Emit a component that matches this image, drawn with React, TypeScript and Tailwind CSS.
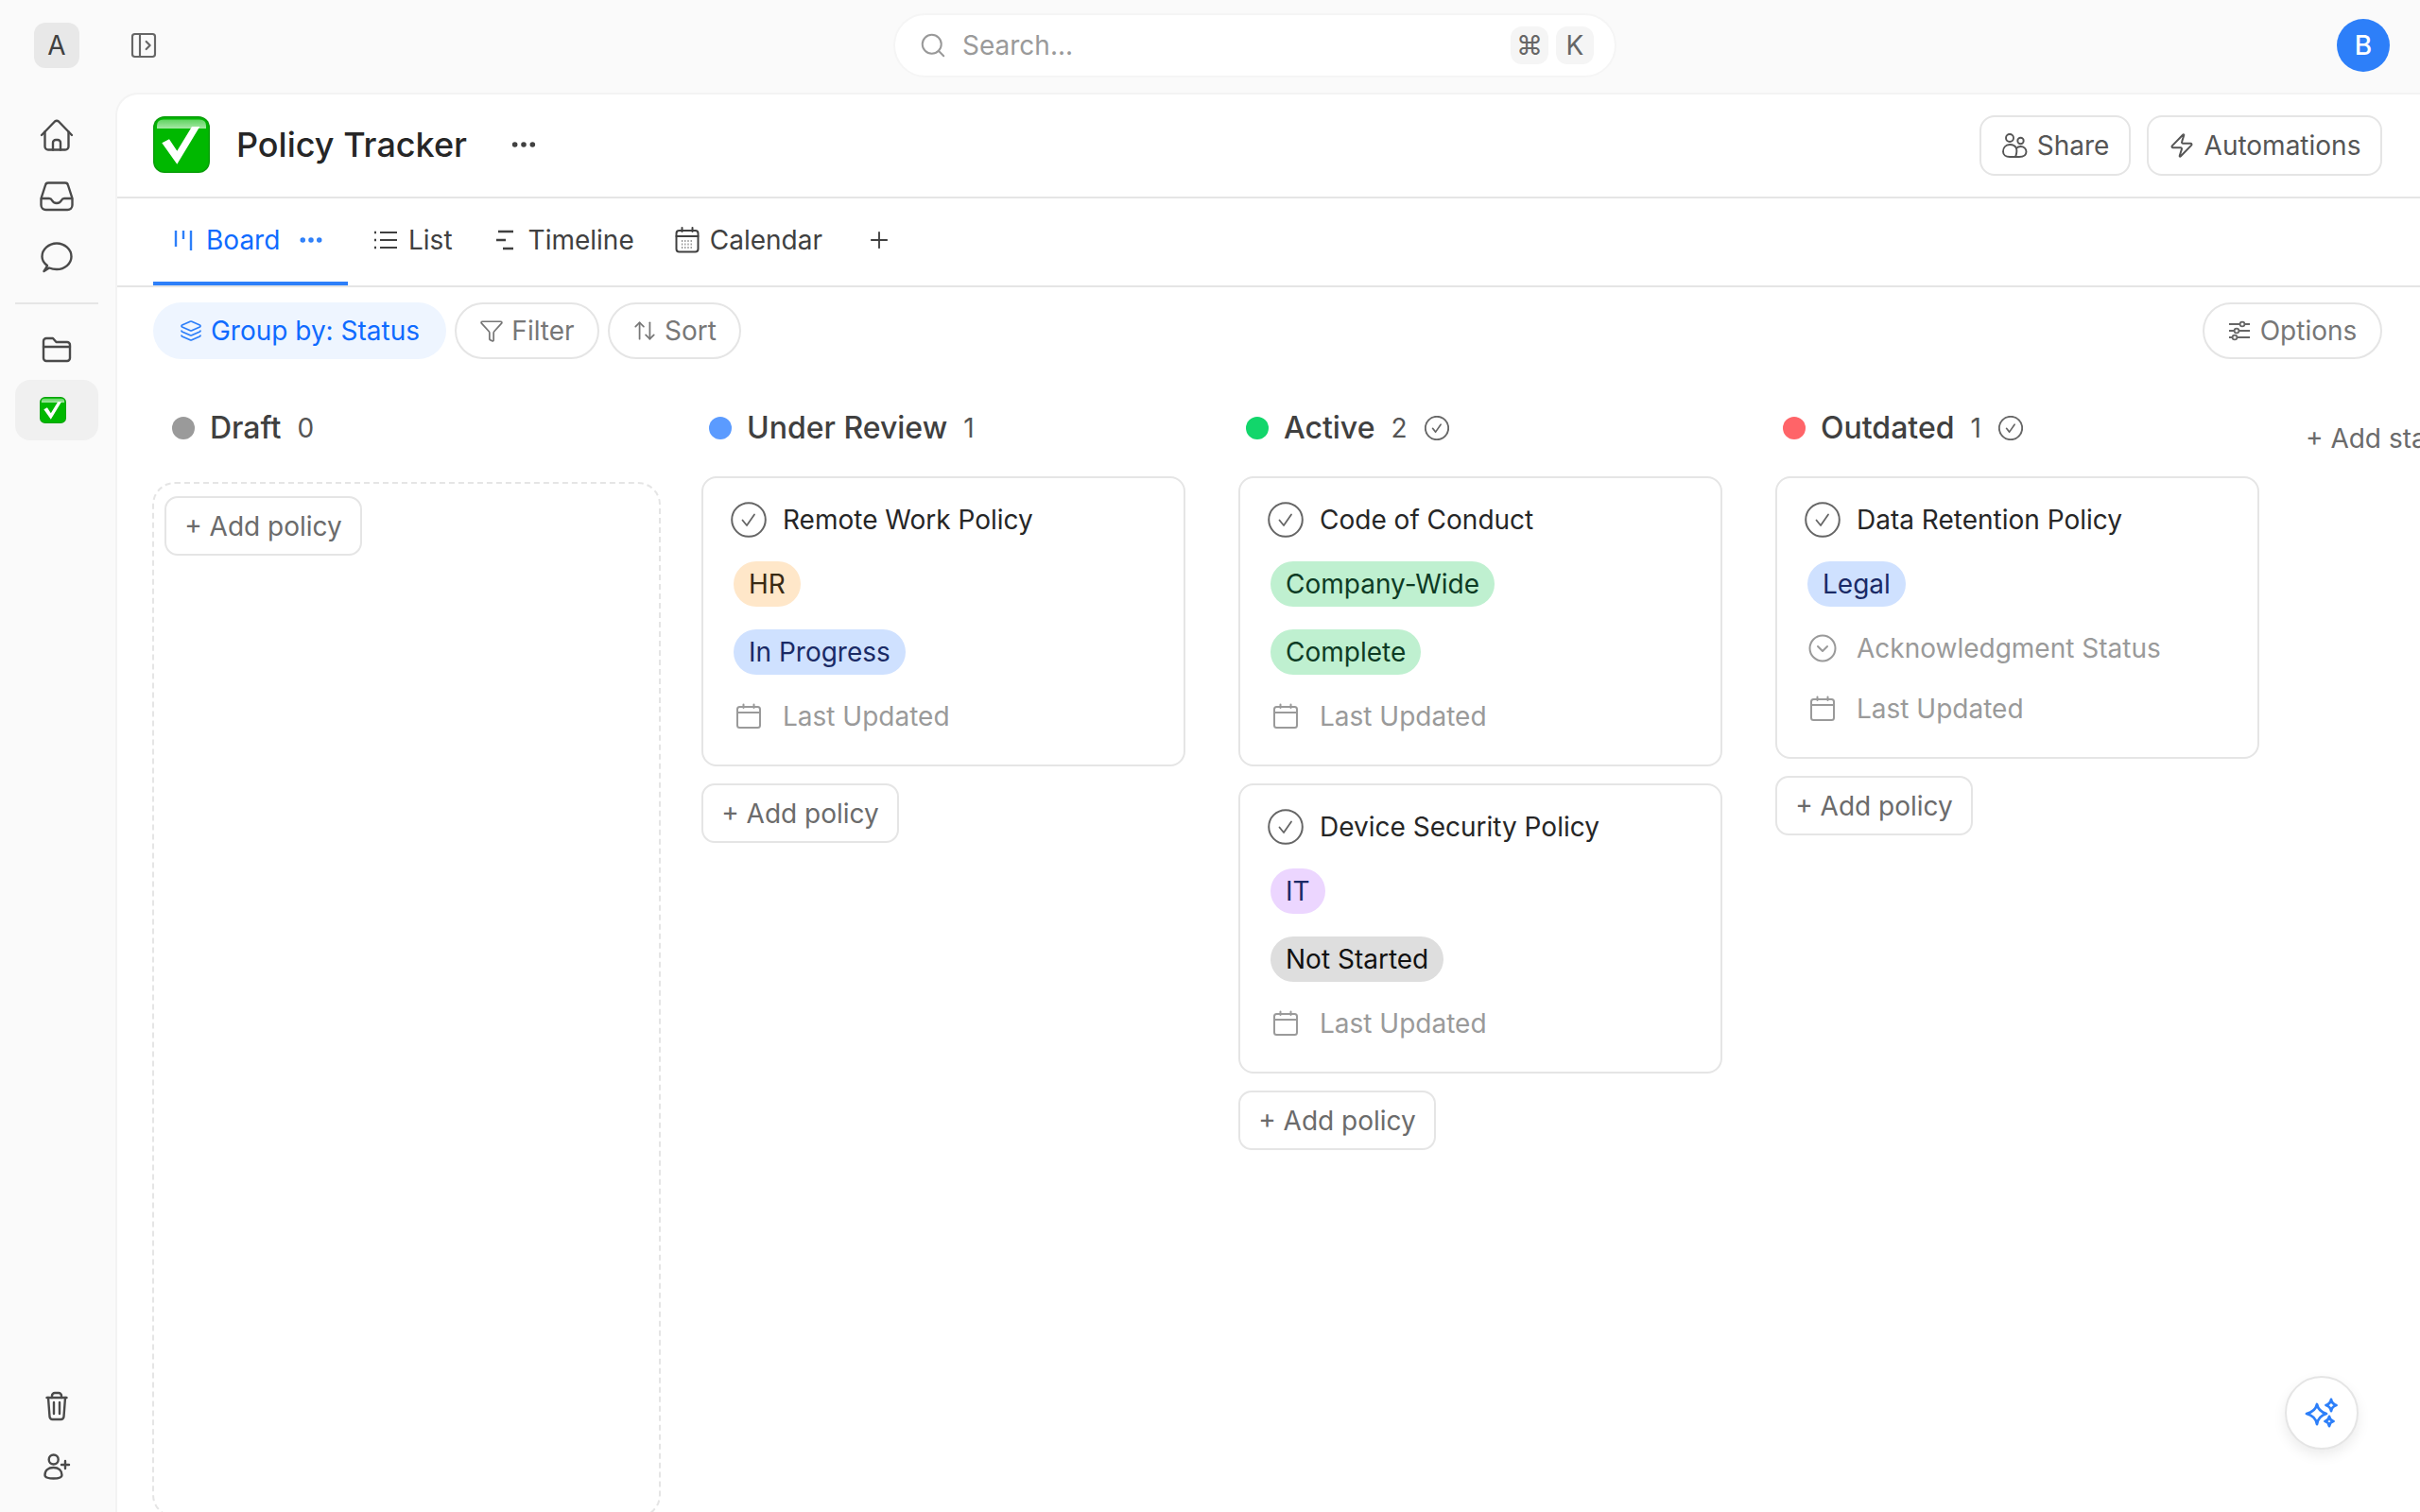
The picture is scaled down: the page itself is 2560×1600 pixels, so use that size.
import React from 'react';
import { ArrowUpDown, Ellipsis, Funnel, Layers, PanelLeftOpen, Plus, Search, Zap } from 'lucide-react';

const HomeIcon = () => (
  <svg width="36" height="36" viewBox="0 0 36 36" fill="none" stroke="#4a4a4a" strokeWidth="2.4" strokeLinecap="round" strokeLinejoin="round">
    <path d="M2 18 L16 3.5 Q18 1.8 20 3.5 L34 18" />
    <path d="M5.5 14.5 V30 a3.5 3.5 0 0 0 3.5 3.5 H27 a3.5 3.5 0 0 0 3.5 -3.5 V14.5" />
    <path d="M14 33.5 V26 a3 3 0 0 1 3 -3 h2 a3 3 0 0 1 3 3 V33.5" />
  </svg>
);

const InboxIcon = () => (
  <svg width="36" height="36" viewBox="0 0 36 36" fill="none" stroke="#4a4a4a" strokeWidth="2.4" strokeLinecap="round" strokeLinejoin="round">
    <path d="M9 3.5 H27 Q29.5 3.5 30 6 L34.5 20 V27 a5 5 0 0 1 -5 5 H6.5 a5 5 0 0 1 -5 -5 V20 L6 6 Q6.5 3.5 9 3.5 Z" />
    <path d="M2 20 H10 Q12 20 13 22 Q14.5 25 18 25 Q21.5 25 23 22 Q24 20 26 20 H34" />
  </svg>
);

const ChatIcon = () => (
  <svg width="36" height="36" viewBox="0 0 36 36" fill="none" stroke="#4a4a4a" strokeWidth="2.4" strokeLinecap="round" strokeLinejoin="round">
    <path d="M8 27 C4.5 24.5 2.5 21 2.5 17.5 C2.5 10 9.5 3.5 18 3.5 C26.5 3.5 33.5 10 33.5 17.5 C33.5 25 26.5 31 18 31 C15 31 12.5 30.5 10 29.5 L4.5 33 Q6.8 30 8 27 Z" />
  </svg>
);

const FolderIcon = () => (
  <svg width="36" height="36" viewBox="0 0 36 36" fill="none" stroke="#4a4a4a" strokeWidth="2.4" strokeLinecap="round" strokeLinejoin="round">
    <path d="M7 6 H14 L17.5 10 H29 a3 3 0 0 1 3 3 V27 a3 3 0 0 1 -3 3 H7 a3 3 0 0 1 -3 -3 V9 a3 3 0 0 1 3 -3Z" />
    <path d="M4 15 H32" />
  </svg>
);

const TrashIcon = () => (
  <svg width="36" height="36" viewBox="0 0 36 36" fill="none" stroke="#4a4a4a" strokeWidth="2.4" strokeLinecap="round" strokeLinejoin="round">
    <path d="M7.5 9 H28.5" />
    <path d="M9 9 L10.5 29 a3 3 0 0 0 3 3 H22.5 a3 3 0 0 0 3 -3 L27 9" />
    <path d="M13 9 V7 a3 3 0 0 1 3 -3 h4 a3 3 0 0 1 3 3 V9" />
    <path d="M15 14 V26 M21 14 V26" />
  </svg>
);

const UserPlusIcon = () => (
  <svg width="36" height="36" viewBox="0 0 36 36" fill="none" stroke="#4a4a4a" strokeWidth="2.4" strokeLinecap="round" strokeLinejoin="round">
    <circle cx="14.7" cy="10.5" r="5" />
    <path d="M5.5 27 C5.5 22 9 19 14.5 19 C20 19 23.5 22 23.5 27 C23.5 29.5 19 30.5 14.5 30.5 C10 30.5 5.5 29.5 5.5 27Z" />
    <path d="M27 12 V20 M23 16 H31" />
  </svg>
);

// glossy green check box, same drawing in title and sidebar
const CheckEmoji = ({ size }: { size: number }) => (
  <svg width={size} height={size} viewBox="0 0 60 60">
    <defs>
      <linearGradient id="gloss" x1="0" y1="0" x2="0" y2="1">
        <stop offset="0" stopColor="#5fd35f" />
        <stop offset="1" stopColor="#a5e8a5" />
      </linearGradient>
    </defs>
    <rect x="0" y="0" width="60" height="60" rx="12" fill="#0a9e0a" />
    <rect x="1.5" y="1.5" width="57" height="57" rx="11" fill="#00b800" />
    <path d="M4 10 Q4 3.5 11 3.5 H49 Q56 3.5 56 10 V13 H4 Z" fill="url(#gloss)" />
    <path d="M9.3 28.3 L17 24.3 L25.3 36.7 L41 11 L49.3 11 L25.3 50.7 Z" fill="#fff" />
  </svg>
);

const CheckCircle = ({ size = 38 }: { size?: number }) => (
  <svg width={size} height={size} viewBox="0 0 38 38" fill="none" stroke="#666" strokeLinecap="round" strokeLinejoin="round">
    <circle cx="19" cy="19" r="17.8" strokeWidth={size < 30 ? 2.8 : 2} />
    <path d="M12.5 19.5 L17 25 L25 13.5" strokeWidth={size < 30 ? 2.4 : 1.8} />
  </svg>
);

const CalendarSmall = () => (
  <svg width="28" height="28" viewBox="0 0 28 28" fill="none" stroke="#9a9a9a" strokeWidth="2" strokeLinecap="round" strokeLinejoin="round">
    <rect x="2" y="4" width="24" height="22" rx="2.5" />
    <path d="M2 10 H26 M8.5 1.5 V5 M19.5 1.5 V5" />
  </svg>
);

const ChevronCircle = () => (
  <svg width="30" height="30" viewBox="0 0 30 30" fill="none" stroke="#9a9a9a" strokeWidth="2" strokeLinecap="round" strokeLinejoin="round">
    <circle cx="15" cy="15" r="13.5" />
    <path d="M10 13 L15 18 L20 13" />
  </svg>
);

const BoardIcon = () => (
  <svg width="20" height="24" viewBox="0 0 20 24" fill="none" stroke="#2d7ff9" strokeWidth="2.4">
    <path d="M2 2 V19 M10 2 V11 M18 2 V23" />
  </svg>
);

const ListIcon = () => (
  <svg width="26" height="24" viewBox="0 0 26 24" fill="none" stroke="#404040" strokeWidth="2.2">
    <path d="M7 4 H25 M7 12 H25 M7 20 H25" />
    <path d="M1 4 H3 M1 12 H3 M1 20 H3" strokeWidth="2.4" />
  </svg>
);

const TimelineIcon = () => (
  <svg width="20" height="24" viewBox="0 0 20 24" fill="none" stroke="#404040" strokeWidth="2.4">
    <path d="M3 3 H19 M1 12 H11 M8 21 H19" />
  </svg>
);

const CalendarTab = () => (
  <svg width="26" height="28" viewBox="0 0 26 28" fill="none" stroke="#404040" strokeWidth="2" strokeLinecap="round" strokeLinejoin="round">
    <rect x="1.5" y="4" width="23" height="22.5" rx="3" />
    <path d="M1.5 10 H24.5 M7.5 1 V5 M18.5 1 V5" />
    <path d="M7 15 H19 M7 18.5 H19 M7 22 H19" stroke="#8a8a8a" strokeWidth="2" strokeDasharray="1.2 2" strokeLinecap="butt" />
  </svg>
);

const ShareIcon = () => (
  <svg width="28" height="28" viewBox="0 0 28 28" fill="none" stroke="#555" strokeWidth="1.9" strokeLinecap="round" strokeLinejoin="round">
    <circle cx="9" cy="6" r="4" />
    <circle cx="20.5" cy="9" r="3.2" />
    <path d="M9 13 C4.5 13 2 16.5 2 20.5 C2 24 5 26 9 26 H19 C23.5 26 26.5 24 26.5 20.5 C26.5 17.5 24 15 20.5 15 C18.5 15 17 15.8 16 17 C15 14.5 12.5 13 9 13 Z" />
    <path d="M16 17 C16.6 19 16.6 22 15 26" />
  </svg>
);

const OptionsIcon = () => (
  <svg width="24" height="24" viewBox="0 0 24 24" fill="none" stroke="#666" strokeWidth="1.8">
    <path d="M1 5 H23 M1 12 H23 M1 19 H23" />
    <circle cx="15" cy="5" r="2.4" fill="#fff" />
    <circle cx="9" cy="12" r="2.4" fill="#fff" />
    <circle cx="7" cy="19" r="2.4" fill="#fff" />
  </svg>
);

const SparkIcon = () => (
  <svg width="36" height="32" viewBox="0 0 36 32" fill="none" stroke="#2d7ff9" strokeWidth="2.8" strokeLinejoin="round">
    <path d="M13 7 Q14.5 14.5 23 17 Q14.5 19.5 13 28 Q11.5 19.5 2 17 Q11.5 14.5 13 7 Z" />
    <path d="M28 2 Q28.8 6.5 33.5 8 Q28.8 9.5 28 14 Q27.2 9.5 22.5 8 Q27.2 6.5 28 2 Z" />
    <path d="M26 20 Q26.6 24 30.5 25 Q26.6 26 26 30 Q25.4 26 21.5 25 Q25.4 24 26 20 Z" />
  </svg>
);

const AddPolicy = ({ className = '' }: { className?: string }) => (
  <button className={`flex h-[63px] w-[209px] items-center justify-center rounded-[14px] border-2 border-[#e5e5e5] bg-white text-[28px] text-[#6b6b6b] ${className}`}>
    + Add policy
  </button>
);

const Tag = ({ label, colors }: { label: string; colors: string }) => (
  <div className={`flex h-[48px] w-fit items-center rounded-full px-[16px] text-[28px] ${colors}`}>{label}</div>
);

const MetaRow = ({ icon, label }: { icon: React.ReactNode; label: string }) => (
  <div className="flex h-[44px] items-center text-[28px] text-[#9a9a9a]">
    <div className="flex w-[38px] justify-center">{icon}</div>
    <span className="ml-[17px]">{label}</span>
  </div>
);

type CardData = {
  title: string;
  tags: { label: string; colors: string }[];
  acknowledgment?: boolean;
};

const Card = ({ title, tags, acknowledgment }: CardData) => (
  <div className="rounded-[16px] border-2 border-[#e5e5e5] bg-white pb-[29px] pl-[29px] pt-[22px]">
    <div className="flex h-[44px] items-center text-[28px] text-[#262626]">
      <CheckCircle />
      <span className="ml-[17px]">{title}</span>
    </div>
    <div className="ml-[3px] mt-[22px] flex flex-col gap-[24px]">
      {tags.map((tag) => (
        <Tag key={tag.label} label={tag.label} colors={tag.colors} />
      ))}
    </div>
    {acknowledgment && (
      <div className="mt-[22px]">
        <MetaRow icon={<ChevronCircle />} label="Acknowledgment Status" />
      </div>
    )}
    <div className={acknowledgment ? 'mt-[20px]' : 'mt-[22px]'}>
      <MetaRow icon={<CalendarSmall />} label="Last Updated" />
    </div>
  </div>
);

const columns = [
  {
    name: 'Under Review',
    dot: 'bg-[#5b9bff]',
    count: 1,
    done: false,
    cards: [
      {
        title: 'Remote Work Policy',
        tags: [
          { label: 'HR', colors: 'bg-[#ffe7c9] text-[#3a2a14]' },
          { label: 'In Progress', colors: 'bg-[#cfe1ff] text-[#1a2a66]' },
        ],
      },
    ],
  },
  {
    name: 'Active',
    dot: 'bg-[#12d66b]',
    count: 2,
    done: true,
    cards: [
      {
        title: 'Code of Conduct',
        tags: [
          { label: 'Company-Wide', colors: 'bg-[#bff0d0] text-[#0d3b24]' },
          { label: 'Complete', colors: 'bg-[#bff0d0] text-[#0d3b24]' },
        ],
      },
      {
        title: 'Device Security Policy',
        tags: [
          { label: 'IT', colors: 'bg-[#ecd6ff] text-[#1a2a66]' },
          { label: 'Not Started', colors: 'bg-[#dedede] text-[#111]' },
        ],
      },
    ],
  },
  {
    name: 'Outdated',
    dot: 'bg-[#ff6468]',
    count: 1,
    done: true,
    cards: [
      {
        title: 'Data Retention Policy',
        tags: [{ label: 'Legal', colors: 'bg-[#cfe1ff] text-[#1a2a66]' }],
        acknowledgment: true,
      },
    ],
  },
];

const ColumnHeader = ({ name, dot, count, done }: { name: string; dot: string; count: number; done?: boolean }) => (
  <div className="flex h-[44px] items-center pl-[21px] pt-[1px]">
    <div className={`h-[24px] w-[24px] rounded-full ${dot}`} />
    <span className="ml-[16px] text-[32px] font-medium text-[#404040]">{name}</span>
    <span className="ml-[17px] text-[28px] text-[#555]">{count}</span>
    {done && (
      <span className="ml-[18px] flex">
        <CheckCircle size={26} />
      </span>
    )}
  </div>
);

export default function App() {
  return (
    <div className="flex h-screen w-screen flex-col overflow-hidden bg-[#fafafa] font-['Inter',sans-serif]">
      {/* Top bar */}
      <div className="flex h-[98px] shrink-0 items-center pb-[2px]">
        <div className="flex w-[945px] items-center pl-[36px]">
          <div className="flex h-[48px] w-[48px] items-center justify-center rounded-[12px] bg-[#e8e8e8] text-[28px] text-[#404040]">A</div>
          <PanelLeftOpen size={32} strokeWidth={1.6} color="#666" className="ml-[52px]" />
        </div>
        <div className="flex h-[68px] w-[765px] items-center rounded-full border-2 border-[#f5f5f5] bg-white pl-[25px] pr-[22px]">
          <Search size={30} strokeWidth={1.6} color="#999" />
          <span className="ml-[16px] text-[28px] text-[#9a9a9a]">Search...</span>
          <div className="ml-auto flex gap-[8px]">
            <div className="flex h-[40px] w-[40px] items-center justify-center rounded-[12px] bg-[#f5f5f5] text-[28px] text-[#666]">⌘</div>
            <div className="flex h-[40px] w-[40px] items-center justify-center rounded-[12px] bg-[#f5f5f5] text-[28px] text-[#666]">K</div>
          </div>
        </div>
        <div className="flex flex-1 justify-end pr-[32px]">
          <div className="flex h-[56px] w-[56px] items-center justify-center rounded-full bg-[#2d7ff9] text-[28px] font-medium text-white">B</div>
        </div>
      </div>

      <div className="flex min-h-0 flex-1">
        {/* Sidebar */}
        <div className="flex w-[122px] shrink-0 flex-col items-center pb-[30px] pr-[2px] pt-[27px]">
          <div className="flex flex-col items-center gap-[29px]">
            <HomeIcon />
            <InboxIcon />
            <div className="-mt-[1px] flex">
              <ChatIcon />
            </div>
          </div>
          <div className="mt-[30px] h-[2px] w-[88px] bg-[#e5e5e5]" />
          <div className="mt-[30px] flex">
            <FolderIcon />
          </div>
          <div className="mt-[14px] flex h-[64px] w-[88px] items-center justify-center rounded-[16px] bg-[#f0f0f0]">
            <div className="mr-[8px] flex">
              <CheckEmoji size={28} />
            </div>
          </div>
          <div className="mt-auto flex flex-col items-center gap-[28px]">
            <TrashIcon />
            <UserPlusIcon />
          </div>
        </div>

        {/* Main panel */}
        <div className="relative min-w-0 flex-1 overflow-hidden rounded-tl-[24px] border-l-2 border-t-2 border-[#f3f3f3] bg-white">
          <div className="flex h-[110px] items-center justify-between border-b-2 border-[#e5e5e5] pl-[38px] pr-[40px]">
            <div className="flex items-center pb-[2px]">
              <CheckEmoji size={60} />
              <span className="ml-[28px] text-[36px] font-medium text-[#262626]">Policy Tracker</span>
              <Ellipsis size={32} color="#404040" strokeWidth={2.2} className="ml-[44px]" />
            </div>
            <div className="flex gap-[17px]">
              <button className="flex h-[64px] w-[160px] items-center justify-center gap-[10px] rounded-[16px] border-2 border-[#e5e5e5] text-[28px] text-[#555]">
                <ShareIcon />
                Share
              </button>
              <button className="flex h-[64px] w-[249px] items-center justify-center gap-[10px] rounded-[16px] border-2 border-[#e5e5e5] text-[28px] text-[#555]">
                <Zap size={28} strokeWidth={1.7} color="#555" />
                Automations
              </button>
            </div>
          </div>

          <div className="flex h-[94px] items-stretch border-b-2 border-[#e5e5e5] pl-[38px]">
            <div className="flex w-[206px] items-center border-b-[4px] border-[#2d7ff9] pl-[22px] text-[28px] text-[#0f6bff]">
              <BoardIcon />
              <span className="ml-[14px]">Board</span>
              <Ellipsis size={30} color="#2d7ff9" strokeWidth={2.4} className="ml-[18px]" />
            </div>
            <div className="ml-[27px] flex items-center pb-[4px] text-[28px] text-[#404040]">
              <ListIcon />
              <span className="ml-[11px]">List</span>
            </div>
            <div className="ml-[45px] flex items-center pb-[4px] text-[28px] text-[#404040]">
              <TimelineIcon />
              <span className="ml-[15px]">Timeline</span>
            </div>
            <div className="ml-[43px] flex items-center pb-[4px] text-[28px] text-[#404040]">
              <CalendarTab />
              <span className="ml-[11px]">Calendar</span>
            </div>
            <div className="ml-[46px] flex items-center pb-[4px]">
              <Plus size={28} color="#404040" strokeWidth={1.6} />
            </div>
          </div>

          <div className="mt-[16px] flex h-[60px] justify-between pl-[38px] pr-[40px]">
            <div className="flex gap-[9px]">
              <button className="flex w-[310px] items-center justify-center gap-[9px] rounded-full bg-[#eef5ff] text-[28px] text-[#0f6bff]">
                <Layers size={24} strokeWidth={1.7} color="#2d7ff9" />
                Group by: Status
              </button>
              <button className="flex w-[153px] items-center justify-center gap-[8px] rounded-full border-2 border-[#e5e5e5] text-[28px] text-[#777]">
                <Funnel size={26} strokeWidth={1.6} color="#777" />
                Filter
              </button>
              <button className="flex w-[141px] items-center justify-center gap-[8px] rounded-full border-2 border-[#e5e5e5] text-[28px] text-[#777]">
                <ArrowUpDown size={26} strokeWidth={1.6} color="#777" />
                Sort
              </button>
            </div>
            <button className="flex w-[190px] items-center justify-center gap-[10px] rounded-full border-2 border-[#e5e5e5] text-[28px] text-[#777]">
              <OptionsIcon />
              Options
            </button>
          </div>

          <div className="mt-[50px] flex gap-[28px] pl-[37px]">
            {/* Empty Draft column keeps its dashed drop area */}
            <div className="w-[540px] shrink-0">
              <ColumnHeader name="Draft" dot="bg-[#9a9a9a]" count={0} />
              <div className="mr-[2px] mt-[36px] h-[1096px] rounded-[24px] border-2 border-dashed border-[#e5e5e5] pl-[11px] pt-[13px]">
                <AddPolicy />
              </div>
            </div>

            {columns.map((col) => (
              <div key={col.name} className="w-[540px] shrink-0">
                <ColumnHeader name={col.name} dot={col.dot} count={col.count} done={col.done} />
                <div className="mt-[30px] flex flex-col gap-[18px] pl-[13px] pr-[15px]">
                  {col.cards.map((card) => (
                    <Card key={card.title} {...card} />
                  ))}
                  <AddPolicy />
                </div>
              </div>
            ))}

            <div className="shrink-0 whitespace-nowrap pl-[6px] pt-[13px] text-[28px] text-[#6b6b6b]">+ Add status</div>
          </div>

          <button className="absolute bottom-[66px] right-[65px] flex h-[78px] w-[78px] items-center justify-center rounded-full border-2 border-[#e5e5e5] bg-white shadow-[0_6px_14px_rgba(0,0,0,0.08)]">
            <SparkIcon />
          </button>
        </div>
      </div>
    </div>
  );
}
